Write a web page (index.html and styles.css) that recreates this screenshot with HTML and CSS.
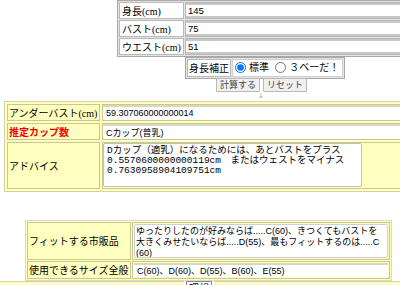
FILE: index.html
```html
<!DOCTYPE html>
<html lang="ja">
<head>
    <meta charset="UTF-8">
    <title>カップ計算</title>
    <link rel="stylesheet" href="styles.css">
</head>
<body>
<div class="page">

    <table class="measure">
        <tr><th>身長(cm)</th><td><input type="text" value="145"></td></tr>
        <tr><th>バスト(cm)</th><td><input type="text" value="75"></td></tr>
        <tr><th>ウエスト(cm)</th><td><input type="text" value="51"></td></tr>
    </table>

    <table class="correction">
        <tr>
            <th>身長補正</th>
            <td>
                <label><input type="radio" name="adj" checked>標準</label>
                <label><input type="radio" name="adj">３ベーだ！</label>
            </td>
        </tr>
    </table>
    <div class="buttons">
        <button>計算する</button>
        <button>リセット</button>
    </div>
    <div class="arrow">↓</div>

    <table class="result">
        <tr>
            <th>アンダーバスト(cm)</th>
            <td><input type="text" value="59.307060000000014"></td>
        </tr>
        <tr>
            <th class="cup">推定カップ数</th>
            <td><input type="text" value="Cカップ(普乳)"></td>
        </tr>
        <tr class="advice">
            <th>アドバイス</th>
            <td><textarea>Dカップ（適乳）になるためには、あとバストをプラス
0.5570600000000119cm　またはウェストをマイナス
0.7630958904109751cm</textarea></td>
        </tr>
    </table>

    <table class="result fit">
        <tr>
            <th>フィットする市販品</th>
            <td><div class="note">ゆったりしたのが好みならば.....C(60)、きつくてもバストを<br>大きくみせたいならば.....D(55)、最もフィットするのは.....C<br>(60)</div></td>
        </tr>
        <tr>
            <th>使用できるサイズ全般</th>
            <td><input type="text" value="C(60)、D(60)、D(55)、B(60)、E(55)"></td>
        </tr>
    </table>

    <div class="bottom">
        <div class="bottom-fill"></div>
        <div class="bottom-cell">理想</div>
        <div class="bottom-rest"></div>
    </div>

</div>
</body>
</html>
```

FILE: styles.css
```css
body
{
    margin: 0;
    background-color: #fff;
    font-family: "Liberation Serif", "Noto Sans CJK JP", serif;
    font-size: 10px;
    overflow: hidden;
}

.page
{
    width: 522px;
}

input, textarea, button
{
    font-family: "Liberation Sans", "Noto Sans CJK JP", sans-serif;
}

/* top input table */
.measure
{
    margin: 0 0 0 117px;
    width: 288px;
    border: 1px solid #a8a8a8;
    border-spacing: 1px;
    background-color: #e4e4e4;
}

.measure th
{
    width: 56px;
    height: 15px;
    padding: 0 2px;
    text-align: left;
    font-weight: normal;
    white-space: nowrap;
    background-color: #fff;
    border: 1px solid #b8b8b8;
}

.measure td
{
    padding: 0;
    height: 15px;
    background-color: #fff;
    border: 1px solid #b8b8b8;
}

.measure input
{
    display: block;
    box-sizing: border-box;
    width: 100%;
    height: 15px;
    margin: 0;
    padding: 0 2px;
    font-size: 9.5px;
    border: none;
    border-top: 2px solid #c8c8c8;
    border-bottom: 2px solid #c8c8c8;
}

.correction
{
    margin: 0 0 0 185px;
    border: 1px solid #a8a8a8;
    border-spacing: 1px;
    background-color: #e4e4e4;
}

.correction th
{
    font-weight: normal;
    padding: 0 1px;
    height: 14px;
    background-color: #fff;
    border: 1px solid #b8b8b8;
}

.correction td
{
    padding: 0 3px 0 1px;
    height: 14px;
    background-color: #fff;
    border: 1px solid #d0d0d0;
    font-family: "Noto Sans CJK JP", sans-serif;
    font-size: 10px;
    line-height: 14px;
    white-space: nowrap;
}

.correction label
{
    display: inline-flex;
    align-items: center;
    gap: 2px;
}

.correction label + label
{
    margin-left: 3px;
}

.correction input
{
    margin: 0 1px;
    width: 11px;
    height: 11px;
}

.buttons
{
    display: flex;
    justify-content: center;
    gap: 3px;
    margin: -1px 0 0 1px;
}

.buttons button
{
    font-family: "Noto Sans CJK JP", sans-serif;
    font-size: 9px;
    line-height: 12px;
    height: 14px;
    padding: 0 3px;
    color: #444;
    background-color: #f0f0f0;
    border: 1px solid #b8b8b8;
    border-radius: 1px;
}

.arrow
{
    text-align: center;
    font-family: "DejaVu Sans", sans-serif;
    font-size: 7px;
    line-height: 9px;
    color: #999;
}

/* yellow result tables */
.result
{
    margin: 0 0 0 4px;
    width: 513px;
    border: 1px solid #d4d4a0;
    border-spacing: 2px;
    background-color: #ffffc0;
}

.result th
{
    width: 89px;
    height: 15px;
    padding: 0 1px;
    text-align: left;
    font-weight: normal;
    white-space: nowrap;
    border: 1px solid #c8c890;
}

.result th.cup
{
    color: #f00000;
    font-weight: bold;
    font-family: "Noto Sans CJK JP", sans-serif;
}

.result td
{
    padding: 0;
    border: 1px solid #c8c890;
    vertical-align: top;
}

.result .advice th
{
    height: 45px;
}

.result input
{
    display: block;
    box-sizing: border-box;
    width: 100%;
    height: 15px;
    margin: 0;
    padding: 0 3px;
    font-size: 9px;
    background-color: #fff;
    border: none;
    border-top: 2px solid #d8d8c0;
}

.result textarea
{
    display: block;
    box-sizing: border-box;
    width: 259px;
    height: 44px;
    margin: 0;
    padding: 2px 3px;
    font-family: "Liberation Mono", "Noto Sans CJK JP", monospace;
    font-size: 9.5px;
    line-height: 10px;
    resize: none;
    border: 1px solid #c0c0c0;
    border-radius: 2px;
}

.fit
{
    margin: 28px 0 0 25px;
    width: 367px;
    border-color: #d8d8d8;
    border-spacing: 1px;
}

.fit th
{
    width: 100px;
    font-family: "Noto Sans CJK JP", sans-serif;
}

.fit td
{
    padding: 1px;
}

.fit input
{
    height: 14px;
    font-size: 9px;
}

.note
{
    box-sizing: border-box;
    height: 34px;
    padding: 1px 1px;
    font-family: "Liberation Sans", "Noto Sans CJK JP", sans-serif;
    font-size: 9px;
    line-height: 11px;
    white-space: nowrap;
    overflow: hidden;
    background-color: #fff;
    border: 1px solid #d0d0d0;
    border-radius: 2px;
}

.bottom
{
    display: flex;
    margin-top: 0;
    height: 12px;
}

.bottom-fill
{
    width: 184px;
    background-color: #ffffc0;
    border-top: 1px solid #d4d4a0;
}

.bottom-cell
{
    margin-left: 2px;
    padding: 0 2px;
    font-family: "Noto Sans CJK JP", sans-serif;
    font-size: 10px;
    line-height: 12px;
    border: 1px solid #888;
    border-bottom: none;
    background-color: #fff;
}

.bottom-rest
{
    flex: 1;
    margin-left: 2px;
    background-color: #ffffc0;
    border-top: 1px solid #d4d4a0;
}
```
